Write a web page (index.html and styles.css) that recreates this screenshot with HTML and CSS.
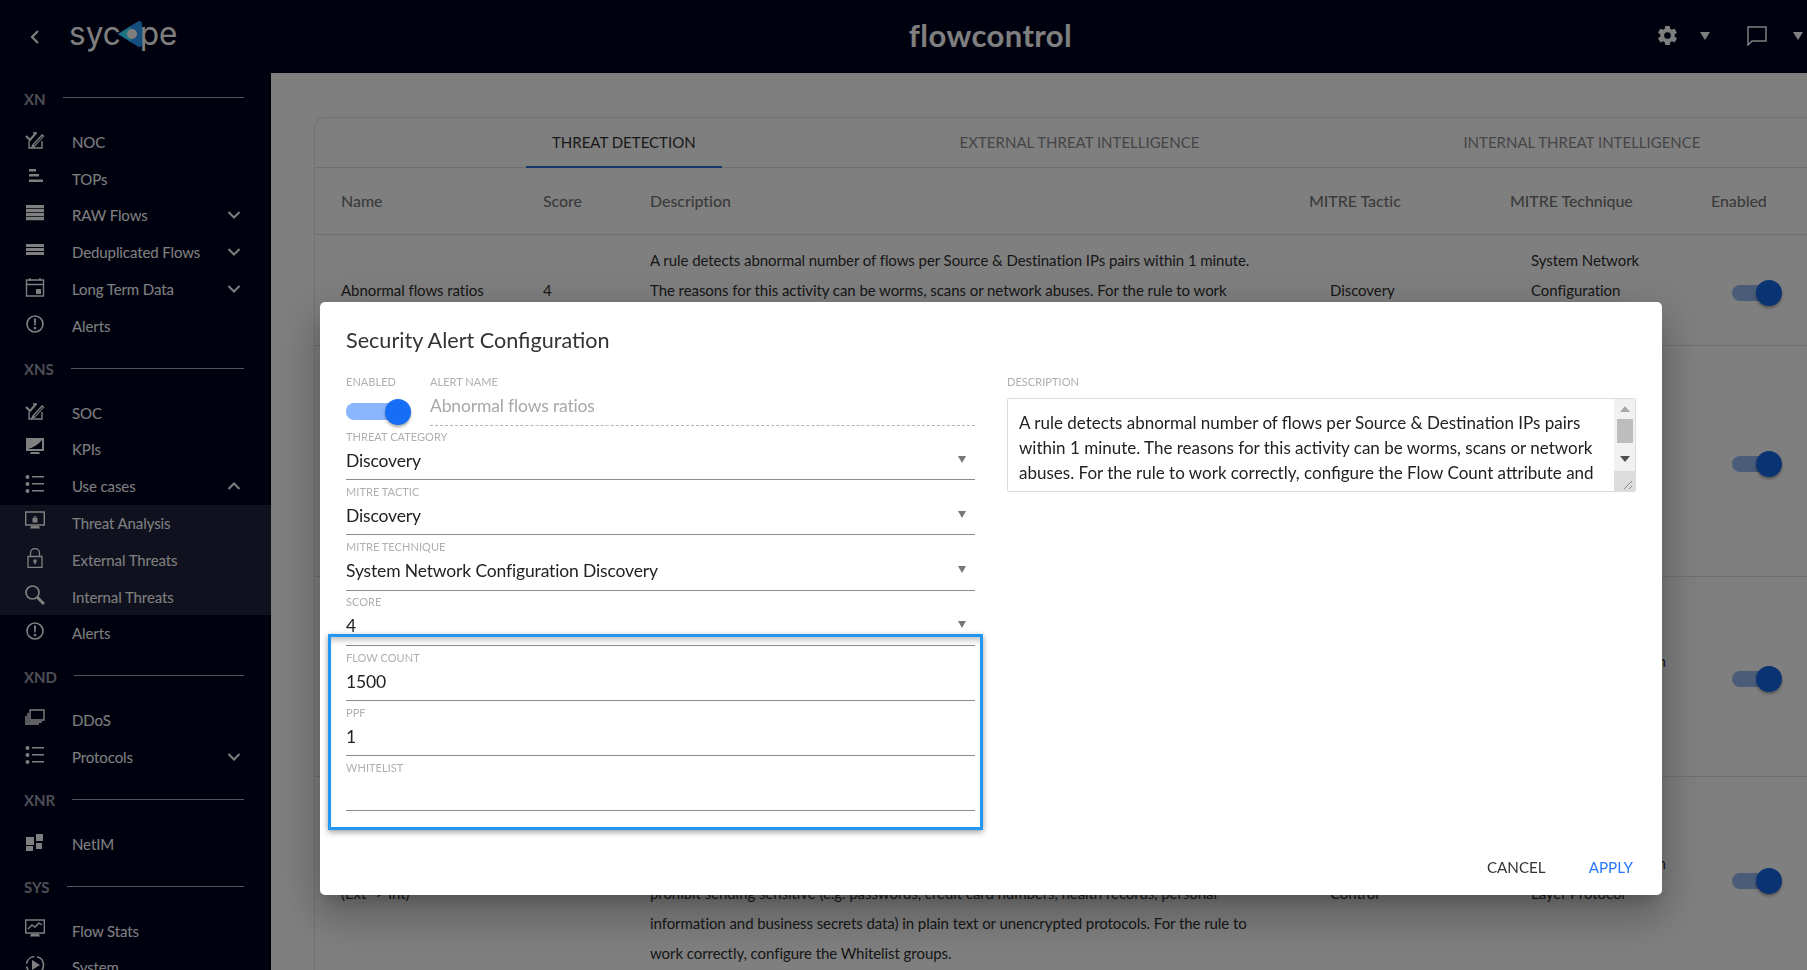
FILE: index.html
```html
<!DOCTYPE html>
<html lang="en">
<head>
    <meta charset="UTF-8">
    <title>Sycope flowcontrol</title>
    <link rel="stylesheet" href="styles.css">
</head>
<body>
    <svg class="sprite" aria-hidden="true">
        <symbol id="i-check" viewBox="0 0 20 20"><path d="M1 6l4 4 6-7" fill="none" stroke="#fff" stroke-width="2"/><path d="M4 11v7h13v-7M8 3h4" fill="none" stroke="#fff" stroke-width="1.400"/><path d="M7 15l10-11 2.500 2-10 11-3.500 1z" fill="#fff"/><path d="M8.800 15l8.400-9 .6.5-8.400 9z" fill="#00021e"/></symbol>
        <symbol id="i-list" viewBox="0 0 20 20"><circle cx="2.500" cy="3" r="2"/><circle cx="2.500" cy="10" r="2"/><circle cx="2.500" cy="17" r="2"/><path d="M7 2h12v1.600H7zM7 9h12v1.600H7zM7 16h12v1.600H7z"/></symbol>
        <symbol id="i-alert" viewBox="0 0 20 20"><circle cx="10" cy="10" r="8" fill="none" stroke="#fff" stroke-width="1.600"/><path d="M8.900 4.500h2.200l-.4 7H9.300zM8.900 13h2.200v2.200H8.900z" fill="#fff"/></symbol>
        <symbol id="i-chev-down" viewBox="0 0 14 10"><path d="M1.500 2l5.500 5.500L12.500 2" fill="none" stroke="#fff" stroke-width="2"/></symbol>
    </svg>

    <header class="topbar">
        <div class="topbar-left">
            <svg class="back" width="12" height="16" viewBox="0 0 12 16"><path d="M9 2L3 8l6 6" fill="none" stroke="#fff" stroke-width="2.200"/></svg>
            <span class="logo">syc<svg class="logo-mark" width="26" height="28" viewBox="0 0 26 28"><path d="M2 14L21 2.500Q24 1 24 4.500V23.500Q24 27 21 25.500Z" fill="#2a9cff" stroke="#2a9cff" stroke-width="2" stroke-linejoin="round"/><path d="M2 14L14 6.500V21.500Z" fill="#38e8ff"/><circle cx="15" cy="14" r="5" fill="#fff"/></svg>pe</span>
        </div>
        <div class="brand">flowcontrol</div>
        <div class="topbar-right">
            <svg class="gear" width="23" height="23" viewBox="0 0 24 24"><path fill="#fff" d="M19.400 13c.04-.33.060-.66.060-1s-.020-.67-.060-1l2.100-1.650c.19-.15.240-.42.120-.64l-2-3.460c-.12-.22-.39-.3-.61-.22l-2.490 1c-.52-.4-1.080-.73-1.690-.98l-.38-2.650A.49.49 0 0 0 14 2h-4c-.25 0-.46.180-.49.420l-.38 2.650c-.61.250-1.170.59-1.690.98l-2.490-1c-.23-.09-.49 0-.61.220l-2 3.460c-.13.220-.07.490.12.640L4.570 11c-.04.330-.07.670-.07 1s.030.670.070 1l-2.110 1.650c-.19.150-.24.420-.12.640l2 3.460c.12.220.39.300.61.220l2.490-1c.52.400 1.080.730 1.690.980l.38 2.650c.03.240.240.420.49.420h4c.25 0 .46-.18.49-.42l.38-2.650c.61-.25 1.170-.59 1.690-.98l2.490 1c.23.090.49 0 .61-.22l2-3.460c.12-.22.070-.49-.12-.64zM12 15.500a3.500 3.500 0 1 1 0-7 3.500 3.500 0 0 1 0 7z"/></svg>
            <span class="caret caret-gear"></span>
            <svg class="chat" width="20" height="20" viewBox="0 0 20 20"><path d="M1 1h18v14H5l-4 4z" fill="none" stroke="#fff" stroke-width="1.500"/></svg>
            <span class="caret"></span>
        </div>
    </header>

    <div class="layout">
        <nav class="sidebar">
            <div class="nav-section">XN</div>
            <div class="nav-item"><svg class="nav-icon"><use href="#i-check"/></svg>NOC</div>
            <div class="nav-item"><svg class="nav-icon" viewBox="0 0 20 20"><path fill="#fff" d="M4 2h7v2.500H4zM4 7h10v2.500H4zM4 12.500h14V15H4z"/></svg>TOPs</div>
            <div class="nav-item"><svg class="nav-icon" viewBox="0 0 20 20"><path fill="#fff" d="M1 2h18v3.200H1zM1 6h18v3.200H1zM1 10h18v3.200H1zM1 14h18v3.200H1z"/></svg>RAW Flows<svg class="chevron"><use href="#i-chev-down"/></svg></div>
            <div class="nav-item"><svg class="nav-icon" viewBox="0 0 20 20"><path fill="#fff" d="M1 4h18v3H1zM1 8h18v3H1zM1 12h18v3H1z"/></svg>Deduplicated Flows<svg class="chevron"><use href="#i-chev-down"/></svg></div>
            <div class="nav-item"><svg class="nav-icon" viewBox="0 0 20 20"><path fill="none" stroke="#fff" stroke-width="1.400" d="M1.500 3h17v16h-17zM1.500 7.500h17M5 1v3M15 1v3"/><path fill="#fff" d="M11 12h5v5h-5z"/></svg>Long Term Data<svg class="chevron"><use href="#i-chev-down"/></svg></div>
            <div class="nav-item"><svg class="nav-icon"><use href="#i-alert"/></svg>Alerts</div>

            <div class="nav-section">XNS</div>
            <div class="nav-item"><svg class="nav-icon"><use href="#i-check"/></svg>SOC</div>
            <div class="nav-item"><svg class="nav-icon" viewBox="0 0 20 20"><path fill="#fff" d="M1 1h18v13H1zM6 15h8l1 2H5z"/><path fill="#00021e" d="M3 12C7 11 13 8 17 3v9z"/></svg>KPIs</div>
            <div class="nav-item"><svg class="nav-icon icon-list"><use href="#i-list"/></svg>Use cases<svg class="chevron flip"><use href="#i-chev-down"/></svg></div>
            <div class="nav-group">
                <div class="nav-item"><svg class="nav-icon" viewBox="0 0 20 20"><path fill="none" stroke="#fff" stroke-width="1.400" d="M.7 1h18.600v13H.7z"/><path fill="#fff" d="M6 15h8l1 2.500H5zM7.500 7h5v4.500h-5zM8.300 7a1.700 2 0 0 1 3.400 0h-.9a.8 1 0 0 0-1.600 0z"/></svg>Threat Analysis</div>
                <div class="nav-item"><svg class="nav-icon" viewBox="0 0 20 20"><path fill="none" stroke="#fff" stroke-width="1.300" d="M3 8.500h14v11H3zM5.500 8.500V5a4.500 4.500 0 0 1 9 0v3.500"/><circle cx="10" cy="13" r="1.800" fill="#fff"/><path fill="#fff" d="M9.200 13h1.600v3H9.200z"/></svg>External Threats</div>
                <div class="nav-item"><svg class="nav-icon" viewBox="0 0 20 20"><circle cx="7.500" cy="7.500" r="6.500" fill="none" stroke="#fff" stroke-width="1.700"/><path d="M12 12l7 7" stroke="#fff" stroke-width="3"/></svg>Internal Threats</div>
            </div>
            <div class="nav-item"><svg class="nav-icon"><use href="#i-alert"/></svg>Alerts</div>

            <div class="nav-section">XND</div>
            <div class="nav-item"><svg class="nav-icon" viewBox="0 0 20 20"><path fill="none" stroke="#fff" stroke-width="1.400" d="M5 2h14v10H5zM3 5v9h14M1 8v8h13"/></svg>DDoS</div>
            <div class="nav-item"><svg class="nav-icon icon-list"><use href="#i-list"/></svg>Protocols<svg class="chevron"><use href="#i-chev-down"/></svg></div>

            <div class="nav-section">XNR</div>
            <div class="nav-item"><svg class="nav-icon" viewBox="0 0 20 20"><path fill="#fff" d="M1 5h8v8H1zM11 2h7v7h-7zM1 14h7v5H1zM11 11h6v6h-6z"/></svg>NetIM</div>

            <div class="nav-section">SYS</div>
            <div class="nav-item"><svg class="nav-icon" viewBox="0 0 20 20"><path fill="none" stroke="#fff" stroke-width="1.400" d="M.7 1h18.600v13H.7zM3 10l4-4 3 2 4-4 3 2"/><path fill="#fff" d="M6 15h8l1 2.500H5z"/></svg>Flow Stats</div>
            <div class="nav-item"><svg class="nav-icon" viewBox="0 0 20 20"><circle cx="10" cy="10" r="8.500" fill="none" stroke="#fff" stroke-width="1.600" stroke-dasharray="11 3"/><path fill="#fff" d="M7 5l8 5-8 5z"/></svg>System</div>
        </nav>

        <main class="content">
            <section class="card">
                <div class="tabs">
                    <div class="tab tab-active">THREAT DETECTION</div>
                    <div class="tab">EXTERNAL THREAT INTELLIGENCE</div>
                    <div class="tab">INTERNAL THREAT INTELLIGENCE</div>
                </div>
                <div class="row row-head">
                    <div>Name</div>
                    <div>Score</div>
                    <div>Description</div>
                    <div>MITRE Tactic</div>
                    <div>MITRE Technique</div>
                    <div>Enabled</div>
                </div>
                <div class="row row-1">
                    <div>Abnormal flows ratios</div>
                    <div>4</div>
                    <div>A rule detects abnormal number of flows per Source &amp; Destination IPs pairs within 1 minute.<br>The reasons for this activity can be worms, scans or network abuses. For the rule to work<br>correctly, configure the Flow Count attribute and the Whitelist groups.</div>
                    <div class="inset">Discovery</div>
                    <div class="inset">System Network<br>Configuration<br>Discovery</div>
                    <div class="inset"><span class="switch"><span class="switch-knob"></span></span></div>
                </div>
                <div class="row row-2">
                    <div></div>
                    <div></div>
                    <div></div>
                    <div></div>
                    <div></div>
                    <div class="inset"><span class="switch"><span class="switch-knob"></span></span></div>
                </div>
                <div class="row row-3">
                    <div></div>
                    <div></div>
                    <div></div>
                    <div></div>
                    <div class="inset">Standard Application<br>Protocol</div>
                    <div class="inset"><span class="switch"><span class="switch-knob"></span></span></div>
                </div>
                <div class="row row-4">
                    <div>&nbsp;<br>(Ext -&gt; Int)</div>
                    <div></div>
                    <div>&nbsp;<br>&nbsp;<br>&nbsp;<br>prohibit sending sensitive (e.g. passwords, credit card numbers, health records, personal<br>information and business secrets data) in plain text or unencrypted protocols. For the rule to<br>work correctly, configure the Whitelist groups.</div>
                    <div class="inset">&nbsp;<br>Control</div>
                    <div class="inset">Standard Application<br>Layer Protocol</div>
                    <div class="inset"><span class="switch"><span class="switch-knob"></span></span></div>
                </div>
            </section>
        </main>
    </div>

    <div class="backdrop"></div>

    <div class="modal">
        <h2 class="modal-title">Security Alert Configuration</h2>
        <div class="modal-body">
            <div class="modal-col">
                <div class="top-fields">
                    <div class="enabled-field">
                        <div class="label">ENABLED</div>
                        <span class="switch switch-light"><span class="switch-knob"></span></span>
                    </div>
                    <div class="name-field">
                        <div class="label">ALERT NAME</div>
                        <div class="value value-disabled">Abnormal flows ratios</div>
                    </div>
                </div>
                <div class="field">
                    <div class="label">THREAT CATEGORY</div>
                    <div class="value">Discovery<span class="arrow"></span></div>
                </div>
                <div class="field">
                    <div class="label">MITRE TACTIC</div>
                    <div class="value">Discovery<span class="arrow"></span></div>
                </div>
                <div class="field">
                    <div class="label">MITRE TECHNIQUE</div>
                    <div class="value">System Network Configuration Discovery<span class="arrow"></span></div>
                </div>
                <div class="field">
                    <div class="label">SCORE</div>
                    <div class="value">4<span class="arrow"></span></div>
                </div>
                <div class="field">
                    <div class="label">FLOW COUNT</div>
                    <div class="value">1500</div>
                </div>
                <div class="field">
                    <div class="label">PPF</div>
                    <div class="value">1</div>
                </div>
                <div class="field">
                    <div class="label">WHITELIST</div>
                    <div class="value"></div>
                </div>
            </div>
            <div class="modal-col">
                <div class="label">DESCRIPTION</div>
                <div class="desc-box">
                    <div class="desc-text">A rule detects abnormal number of flows per Source &amp; Destination IPs pairs within 1 minute. The reasons for this activity can be worms, scans or network abuses. For the rule to work correctly, configure the Flow Count attribute and</div>
                    <div class="scroll">
                        <span class="scroll-up"></span>
                        <span class="scroll-thumb"></span>
                        <span class="scroll-down"></span>
                        <span class="scroll-grip"><svg width="20" height="20" viewBox="0 0 20 20"><path d="M10 18l8-8M15 18l3-3" stroke="#888" stroke-width="1"/></svg></span>
                    </div>
                </div>
            </div>
        </div>
        <div class="modal-actions">
            <span class="action">CANCEL</span>
            <span class="action action-primary">APPLY</span>
        </div>
        <div class="highlight"></div>
    </div>
</body>
</html>
```

FILE: styles.css
```css
* {
    box-sizing: border-box;
}
html, body {
    margin: 0;
    padding: 0;
    height: 970px;
    overflow: hidden;
}
body {
    font-family: Lato, "Open Sans", sans-serif;
    background-color: #ffffff;
    color: #333;
    font-size: 15px;
}
.sprite {
    display: none;
}

/* top bar */
.topbar {
    height: 73px;
    background-color: #00021e;
    color: #fff;
    display: flex;
    align-items: center;
    position: relative;
}
.topbar-left {
    width: 271px;
    display: flex;
    align-items: center;
    padding-left: 29px;
}
.back {
    margin-right: 28px;
}
.logo {
    font-family: Inter, Lato, sans-serif;
    font-size: 31.5px;
    line-height: 40px;
    display: flex;
    align-items: center;
    margin-top: -6px;
}
.logo-mark {
    margin: 0 -3px 0 -4px;
}
.brand {
    width: 1439px;
    text-align: center;
    font-size: 31px;
    font-weight: 700;
    letter-spacing: 0.4px;
    margin-top: -3px;
}
.topbar-right {
    position: absolute;
    left: 1656px;
    top: 24px;
    display: flex;
    align-items: center;
}
.caret {
    width: 0;
    height: 0;
    border-left: 5.5px solid transparent;
    border-right: 5.5px solid transparent;
    border-top: 8px solid #fff;
    margin-left: 26px;
}
.caret-gear {
    margin-left: 21px;
    margin-right: 37px;
}

/* sidebar */
.layout {
    display: flex;
    height: 897px;
}
.sidebar {
    width: 271px;
    flex-shrink: 0;
    background-color: #00021e;
    color: #fff;
    padding-top: 0.5px;
}
.nav-section {
    height: 50px;
    display: flex;
    align-items: center;
    padding: 0 27px 0 24px;
    font-size: 15px;
    font-weight: 700;
    color: #9a9caa;
}
.nav-section::after {
    content: "";
    flex: 1;
    height: 1px;
    margin-left: 17px;
    margin-top: -2px;
    background-color: #a8a9b2;
}
.nav-item {
    height: 36.8px;
    display: flex;
    align-items: center;
    padding: 0 30px 0 25px;
    font-size: 15px;
    letter-spacing: -0.1px;
}
.nav-icon {
    width: 20px;
    height: 20px;
    margin-right: 27px;
    margin-top: -4px;
    flex-shrink: 0;
}
.icon-list {
    fill: #fff;
}
.chevron {
    width: 14px;
    height: 10px;
    margin-left: auto;
}
.flip {
    transform: rotate(180deg);
}
.nav-group {
    background-color: #20233d;
}

/* table behind the dialog */
.content {
    flex: 1;
    padding: 44px 0 0 43px;
    margin-right: -12px;
    min-width: 0;
}
.card {
    border: 1px solid #e4e4e6;
    border-bottom: 0;
    border-radius: 10px 0 0 0;
}
.tabs {
    display: flex;
    gap: 212px;
    padding-left: 211px;
    height: 50px;
    border-bottom: 1px solid #e0e0e2;
}
.tab {
    padding: 0 26px;
    line-height: 48px;
    font-size: 15px;
    white-space: nowrap;
    color: #8a8a90;
}
.tab-active {
    color: #333;
    border-bottom: 2px solid #2a6fd8;
    height: 50px;
}
.row {
    display: grid;
    grid-template-columns: 202px 107px 659px 201px 201px 1fr;
    align-items: center;
    padding-left: 26px;
    padding-bottom: 1px;
    border-bottom: 1px solid #e0e0e2;
    line-height: 30px;
    font-size: 15px;
    letter-spacing: -0.065px;
    white-space: nowrap;
    color: #303030;
}
.row-head {
    height: 67px;
    padding-bottom: 0;
    font-size: 16px;
    font-weight: 500;
    color: #777;
}
.row-1 {
    height: 111px;
}
.row-2 {
    height: 231px;
}
.row-3 {
    height: 200px;
}
.row-4 {
    height: 204px;
}
.inset {
    padding-left: 21px;
}
.switch {
    display: block;
    position: relative;
    width: 44px;
    height: 16px;
    border-radius: 8px;
    background-color: #94b8f0;
    margin-top: 6px;
}
.switch-knob {
    position: absolute;
    right: -6px;
    top: -5px;
    width: 26px;
    height: 26px;
    border-radius: 50%;
    background-color: #1467e6;
    box-shadow: 0 2px 3px rgba(0,0,0,0.35);
}

/* dialog */
.backdrop {
    position: fixed;
    top: 0;
    left: 0;
    right: 0;
    bottom: 0;
    background-color: rgba(0,0,0,0.5);
}
.modal {
    position: absolute;
    left: 320px;
    top: 302px;
    width: 1342px;
    height: 593px;
    padding: 26px 26px 0;
    background-color: #fff;
    border-radius: 5px;
    display: flex;
    flex-direction: column;
    box-shadow: 0 11px 15px -7px rgba(0,0,0,0.2), 0 24px 38px 3px rgba(0,0,0,0.14), 0 9px 46px 8px rgba(0,0,0,0.12);
}
.modal-title {
    margin: 0 0 24px;
    font-size: 21.6px;
    line-height: 24px;
    font-weight: 400;
    color: #333;
}
.modal-body {
    flex: 1;
    display: flex;
    gap: 32px;
}
.modal-col {
    width: 629px;
}
.label {
    font-size: 11px;
    line-height: 12px;
    letter-spacing: 0.05px;
    color: #b0b0b0;
    white-space: nowrap;
}
.value {
    position: relative;
    font-size: 17.5px;
    line-height: 25px;
    height: 36px;
    padding-top: 5px;
    letter-spacing: -0.15px;
    color: #222;
    white-space: nowrap;
}
.value-disabled {
    color: #a8a8a8;
}
.top-fields {
    display: flex;
    height: 50px;
    margin-bottom: 5.2px;
}
.enabled-field {
    width: 84px;
}
.enabled-field .switch {
    width: 59px;
    height: 17px;
    margin-top: 15px;
}
.switch-light {
    background-color: #8ab6ff;
}
.switch-light .switch-knob {
    right: -6px;
    top: -4.500px;
    background-color: #156ef5;
}
.name-field {
    flex: 1;
    height: 50px;
    border-bottom: 1px dashed #b4b4b4;
}
.field {
    height: 49.2px;
    margin-bottom: 5.9px;
    border-bottom: 1px solid #8c8c8c;
}
.arrow {
    position: absolute;
    right: 9px;
    top: 13px;
    width: 0;
    height: 0;
    border-left: 4px solid transparent;
    border-right: 4px solid transparent;
    border-top: 7px solid #777;
}
.desc-box {
    display: flex;
    height: 94px;
    margin-top: 10px;
    border: 1px solid #dcdcdc;
    border-radius: 2px;
    overflow: hidden;
}
.desc-text {
    flex: 1;
    padding: 11px 0 0 11px;
    font-size: 17px;
    line-height: 25px;
    color: #222;
}
.scroll {
    width: 21px;
    background-color: #f1f1f1;
    display: flex;
    flex-direction: column;
    align-items: center;
    position: relative;
    flex-shrink: 0;
}
.scroll-up {
    width: 0;
    height: 0;
    margin-top: 7px;
    border-left: 5px solid transparent;
    border-right: 5px solid transparent;
    border-bottom: 6px solid #a8a8a8;
}
.scroll-thumb {
    width: 16px;
    height: 24px;
    margin-top: 7px;
    background-color: #bdbdbd;
}
.scroll-down {
    width: 0;
    height: 0;
    margin-top: 13px;
    border-left: 5px solid transparent;
    border-right: 5px solid transparent;
    border-top: 6px solid #505050;
}
.scroll-grip {
    position: absolute;
    left: 0;
    bottom: 0;
    width: 21px;
    height: 20px;
    background-color: #dcdcdc;
}
.modal-actions {
    display: flex;
    justify-content: flex-end;
    gap: 43px;
    padding: 0 3px 18px 0;
}
.action {
    font-size: 15.2px;
    line-height: 20px;
    color: #333;
}
.action-primary {
    color: #2979ff;
}
.highlight {
    position: absolute;
    left: 8px;
    top: 332px;
    width: 655px;
    height: 196px;
    border: 3px solid #2196f3;
    box-shadow: 0 2px 6px rgba(0,0,0,0.4), inset 0 7px 6px -4px rgba(0,0,0,0.25);
}
```
